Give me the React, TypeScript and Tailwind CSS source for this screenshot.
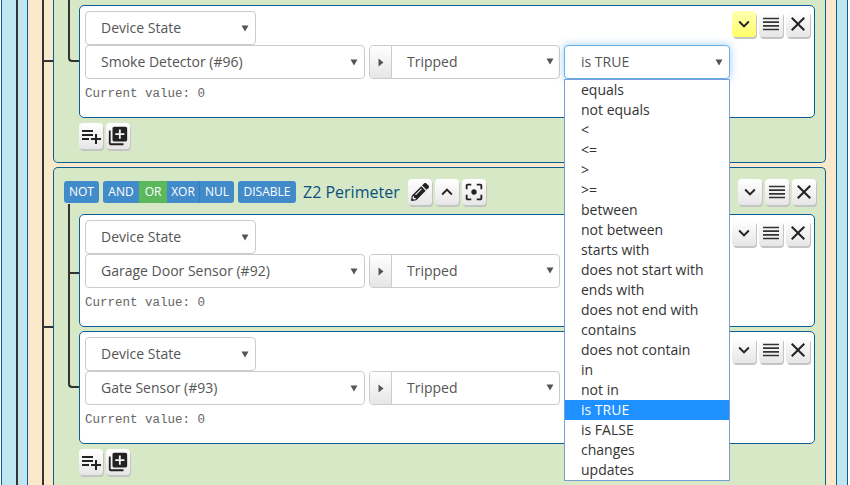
import React from "react";
import { MdPlaylistAdd, MdLibraryAdd, MdKeyboardArrowDown, MdKeyboardArrowUp, MdClose, MdFilterCenterFocus } from "react-icons/md";
import { FaPencilAlt } from "react-icons/fa";

const Caret = () => (
  <svg width="8" height="7" viewBox="0 0 8 7" className="absolute right-[6px] top-[13px]">
    <path d="M0.5 0.5H7.5L4 6.5Z" fill="#555555" />
  </svg>
);

const Select = ({ label, className }: { label: string; className: string }) => (
  <div className={`relative h-[34px] shrink-0 rounded-[4px] border border-[#cccccc] bg-white pl-[15px] text-[14px] leading-[32px] text-[#555555] ${className}`}>
    {label}
    <Caret />
  </div>
);

const Bars = () => (
  <svg width="18" height="14" viewBox="0 0 18 14">
    <path d="M1 1.5H17M1 5.2H17M1 8.9H17M1 12.5H17" stroke="#333333" strokeWidth="1.7" fill="none" />
  </svg>
);

const IconBtn = ({ children, yellow, className = "" }: { children: React.ReactNode; yellow?: boolean; className?: string }) => (
  <div
    className={`flex h-[26px] w-[24px] shrink-0 items-center justify-center rounded-[4px] text-[#222222] shadow-[1px_2px_0_#c4c4c4] ${
      yellow ? "bg-gradient-to-b from-[#ffffb0] to-[#ffff66]" : "bg-gradient-to-b from-white to-[#e6e6e6]"
    } ${className}`}
  >
    {children}
  </div>
);

const RowButtons = ({ yellow }: { yellow?: boolean }) => (
  <div className="absolute right-[4px] top-[5px] flex gap-[3px]">
    <IconBtn yellow={yellow}><MdKeyboardArrowDown size={22} /></IconBtn>
    <IconBtn><Bars /></IconBtn>
    <IconBtn><MdClose size={24} /></IconBtn>
  </div>
);

const Tripped = ({ device, focused }: { device: string; focused?: boolean }) => (
  <div className="mt-0 flex">
    <Select label={device} className="w-[280px]" />
    <div className="ml-[4px] flex h-[34px] w-[191px] shrink-0 rounded-[4px] border border-[#cccccc] bg-white">
      <div className="flex w-[22px] items-center justify-center rounded-l-[3px] border-r border-[#cccccc] bg-gradient-to-b from-white to-[#e6e6e6]">
        <svg width="6" height="9" viewBox="0 0 6 9"><path d="M0.5 0.5V8.5L5.5 4.5Z" fill="#555555" /></svg>
      </div>
      <div className="relative flex-1 pl-[15px] text-[14px] leading-[32px] text-[#555555]">
        Tripped
        <svg width="8" height="7" viewBox="0 0 8 7" className="absolute right-[5px] top-[12px]"><path d="M0.5 0.5H7.5L4 6.5Z" fill="#555555" /></svg>
      </div>
    </div>
    <div
      className={`relative ml-[4px] h-[34px] w-[166px] shrink-0 rounded-[4px] border bg-white pl-[16px] text-[14px] leading-[32px] text-[#555555] ${
        focused ? "border-[#66afe9] shadow-[0_0_8px_rgba(102,175,233,0.6)]" : "border-[#cccccc]"
      }`}
    >
      is TRUE
      <Caret />
    </div>
  </div>
);

const Card = ({ device, yellow, focused, overlap }: { device: string; yellow?: boolean; focused?: boolean; overlap?: boolean }) => (
  <div className={`relative h-[113px] rounded-[5px] border border-[#0b5e94] bg-white pl-[5px] pt-[5px] ${overlap ? "mt-[4px]" : ""}`}>
    <Select label="Device State" className="w-[171px]" />
    <Tripped device={device} focused={focused} />
    <div className="mt-[7px] font-['Liberation_Mono',monospace] text-[12.5px] leading-[16px] text-[#666666]">Current value: 0</div>
    <RowButtons yellow={yellow} />
  </div>
);

const AddRow = () => (
  <div className="mt-[5px] flex gap-[3px]">
    <IconBtn className="w-[23px]"><MdPlaylistAdd size={24} /></IconBtn>
    <IconBtn className="w-[23px]"><MdLibraryAdd size={22} /></IconBtn>
  </div>
);

const Chip = ({ label, className }: { label: string; className: string }) => (
  <div className={`flex h-[22px] items-center justify-center bg-[#428bca] text-[12px] text-white ${className}`}>{label}</div>
);

const options = [
  "equals", "not equals", "<", "<=", ">", ">=", "between", "not between", "starts with", "does not start with",
  "ends with", "does not end with", "contains", "does not contain", "in", "not in", "is TRUE", "is FALSE", "changes", "updates",
];

export default function App() {
  return (
    <div className="relative h-[485px] w-[850px] overflow-hidden bg-white pl-px pr-[2px] font-['Open_Sans',sans-serif]">
      <div className="relative h-full border-x border-[#0b5e94] bg-[#bde6f0] pl-[25px] pr-[10px]">
        <div className="absolute left-[14px] top-0 h-full w-[2px] bg-[#333333]" />
        <div className="relative h-full border-x border-[#0b5e94] bg-[#f9e8c9] pl-[25px] pr-[10px]">
          <div className="absolute left-[14px] top-0 h-full w-[2px] bg-[#333333]" />
          <div className="absolute left-[15px] top-[60px] h-[2px] w-[10px] bg-[#333333]" />
          <div className="absolute left-[15px] top-[326px] h-[2px] w-[10px] bg-[#333333]" />

          <div className="relative h-[163px] rounded-b-[5px] border-x border-b border-[#0b5e94] bg-[#d6e8c6] pl-[25px] pr-[10px] pt-[5px]">
            <div className="absolute left-[14px] top-0 h-[62px] w-[12px] rounded-bl-[4px] border-b-2 border-l-2 border-[#333333]" />
            <Card device="Smoke Detector (#96)" yellow focused />
            <AddRow />
          </div>

          <div className="relative mt-[4px] h-[400px] rounded-t-[5px] border-x border-t border-[#0b5e94] bg-[#d6e8c6] pl-[25px] pr-[10px]">
            <div className="absolute left-[14px] top-[36px] h-[184px] w-[12px] rounded-bl-[4px] border-b-2 border-l-2 border-[#333333]" />
            <div className="absolute left-[15px] top-[104px] h-[2px] w-[10px] bg-[#333333]" />

            <div className="-ml-[15px] -mr-[10px] flex h-[46px] items-center pt-[1px]">
              <Chip label="NOT" className="w-[35px] rounded-[3px]" />
              <div className="ml-[4px] flex">
                <Chip label="AND" className="w-[36px] rounded-l-[3px]" />
                <Chip label="OR" className="w-[28px] !bg-[#5cb85c]" />
                <Chip label="XOR" className="w-[33px] border-r border-[#3a7cb5]" />
                <Chip label="NUL" className="w-[34px] rounded-r-[3px]" />
              </div>
              <Chip label="DISABLE" className="ml-[4px] w-[58px] rounded-[3px]" />
              <span className="ml-[7px] text-[16px] leading-[22px] text-[#0b4f7f]">Z2 Perimeter</span>
              <div className="ml-[8px] flex gap-[3px]">
                <IconBtn><FaPencilAlt size={18} /></IconBtn>
                <IconBtn><MdKeyboardArrowUp size={22} /></IconBtn>
                <IconBtn><MdFilterCenterFocus size={22} /></IconBtn>
              </div>
              <div className="ml-auto mr-[9px] flex gap-[3px]">
                <IconBtn><MdKeyboardArrowDown size={22} /></IconBtn>
                <IconBtn><Bars /></IconBtn>
                <IconBtn><MdClose size={24} /></IconBtn>
              </div>
            </div>

            <Card device="Garage Door Sensor (#92)" />
            <Card device="Gate Sensor (#93)" overlap />
            <AddRow />
          </div>
        </div>
      </div>

      <div className="absolute left-[564px] top-[79px] w-[166px] border border-[#7a9fd8] bg-white text-[14px] leading-[20px] text-[#333333]">
        {options.map((o) => (
          <div key={o} className={`h-[20px] pl-[16px] ${o === "is TRUE" ? "bg-[#1e90ff] text-white" : ""}`}>{o}</div>
        ))}
      </div>
    </div>
  );
}
